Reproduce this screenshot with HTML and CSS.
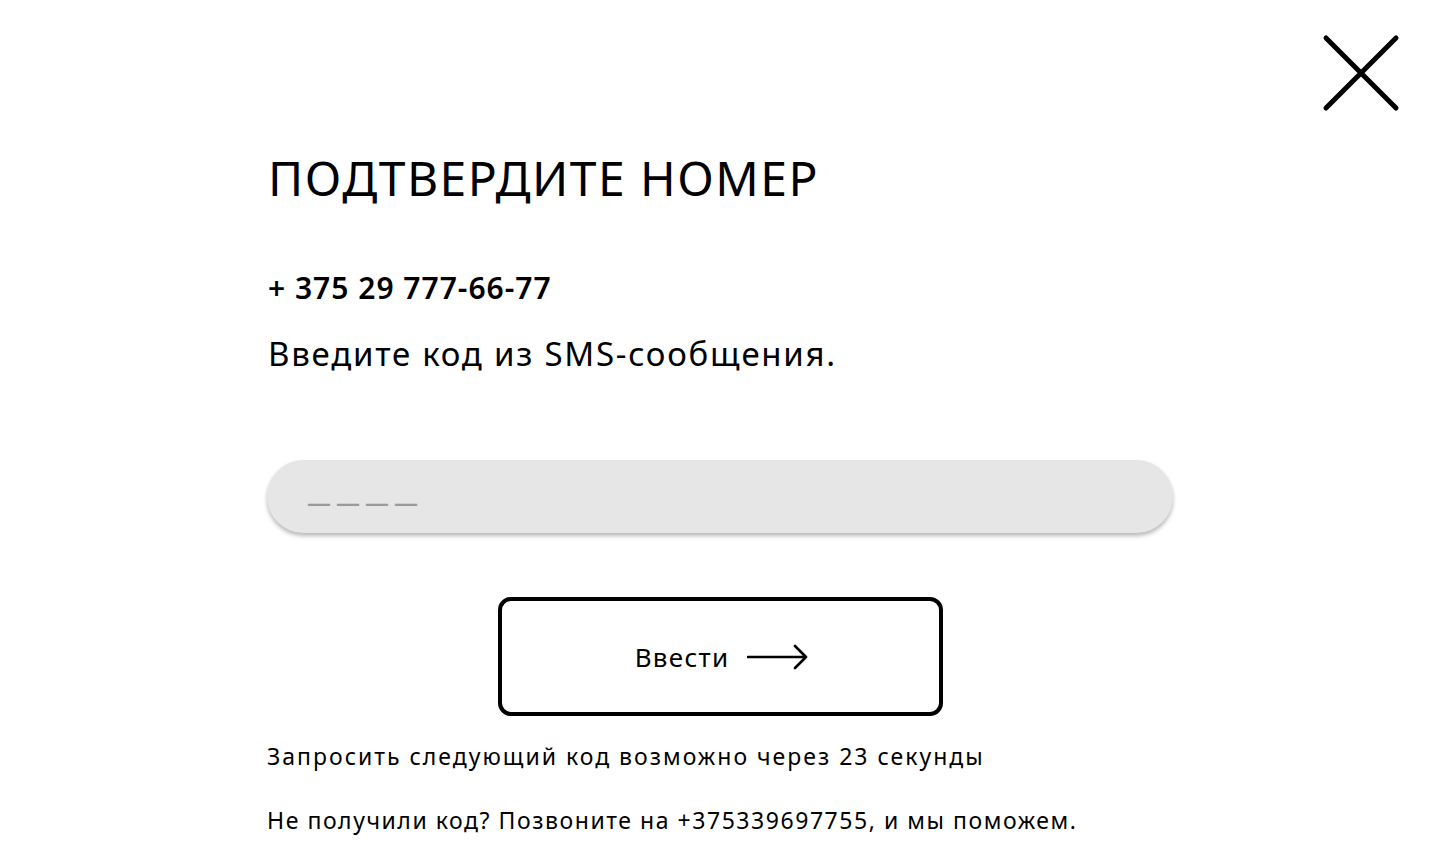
FILE: index.html
```html
<!DOCTYPE html>
<html lang="ru">
<head>
<meta charset="utf-8">
<title>Подтвердите номер</title>
<link rel="stylesheet" href="styles.css">
</head>
<body>
<div class="modal">
  <div class="topbar">
    <button class="close" aria-label="Закрыть">
      <svg width="78" height="78" viewBox="0 0 78 78"><path d="M4 4 L74 74 M74 4 L4 74" stroke="#000" stroke-width="5" stroke-linecap="round" fill="none"/></svg>
    </button>
  </div>
  <div class="content">
    <h1 class="title">ПОДТВЕРДИТЕ НОМЕР</h1>
    <p class="phone">+ 375 29 777-66-77</p>
    <p class="lead">Введите код из SMS-сообщения.</p>
    <div class="field"><span class="placeholder">————</span></div>
    <div class="actions">
      <button class="submit"><span>Ввести</span>
        <svg width="62" height="26" viewBox="0 0 62 26"><path d="M1 13 H59 M48 2 L59 13 L48 24" stroke="#000" stroke-width="2.6" stroke-linecap="round" stroke-linejoin="round" fill="none"/></svg>
      </button>
    </div>
    <p class="note">Запросить следующий код возможно через 23 секунды</p>
    <p class="note help">Не получили код? Позвоните на +375339697755, и мы поможем.</p>
  </div>
</div>
</body>
</html>
```
FILE: styles.css
```css
* { box-sizing: border-box; }
html, body { margin: 0; padding: 0; background: #fff; }
body { font-family: "Noto Sans", "DejaVu Sans", sans-serif; color: #000; }
.modal { width: 1440px; height: 868px; overflow: hidden; }
.topbar { display: flex; justify-content: flex-end; padding: 34px 40px 0 0; height: 112px; }
.close { border: 0; background: none; padding: 0; width: 78px; height: 78px; cursor: pointer; }
.close svg { display: block; }
.content { margin-left: 267px; width: 906px; }
.title { margin: 36px 0 0 1px; font-size: 48px; font-weight: 400; line-height: 60px; letter-spacing: 1.5px; }
.phone { margin: 60px 0 0 1px; font-size: 30px; font-weight: 600; line-height: 40px; letter-spacing: 1px; }
.lead { margin: 24px 0 0 1px; font-size: 33px; font-weight: 400; line-height: 44px; letter-spacing: 1.75px; }
.field { margin-top: 84px; height: 73px; border-radius: 37px; background: #e6e6e6; box-shadow: 0 3px 4px rgba(0,0,0,0.28); display: flex; align-items: center; padding-left: 40px; }
.placeholder { font-size: 24px; font-weight: 600; color: #9a9a9a; letter-spacing: 5px; line-height: 30px; position: relative; top: 5px; }
.actions { display: flex; justify-content: center; margin-top: 64px; }
.submit { width: 445px; height: 119px; border: 4px solid #000; border-radius: 13px; background: #fff; display: flex; align-items: center; justify-content: center; gap: 18px; font-family: inherit; font-size: 26px; letter-spacing: 1.3px; color: #000; cursor: pointer; padding: 0 0 0 4px; }
.submit svg { display: block; }
.note { margin: 24px 0 0; font-size: 23px; line-height: 32px; letter-spacing: 2px; }
.help { margin-top: 32px; letter-spacing: 1.55px; }
```
